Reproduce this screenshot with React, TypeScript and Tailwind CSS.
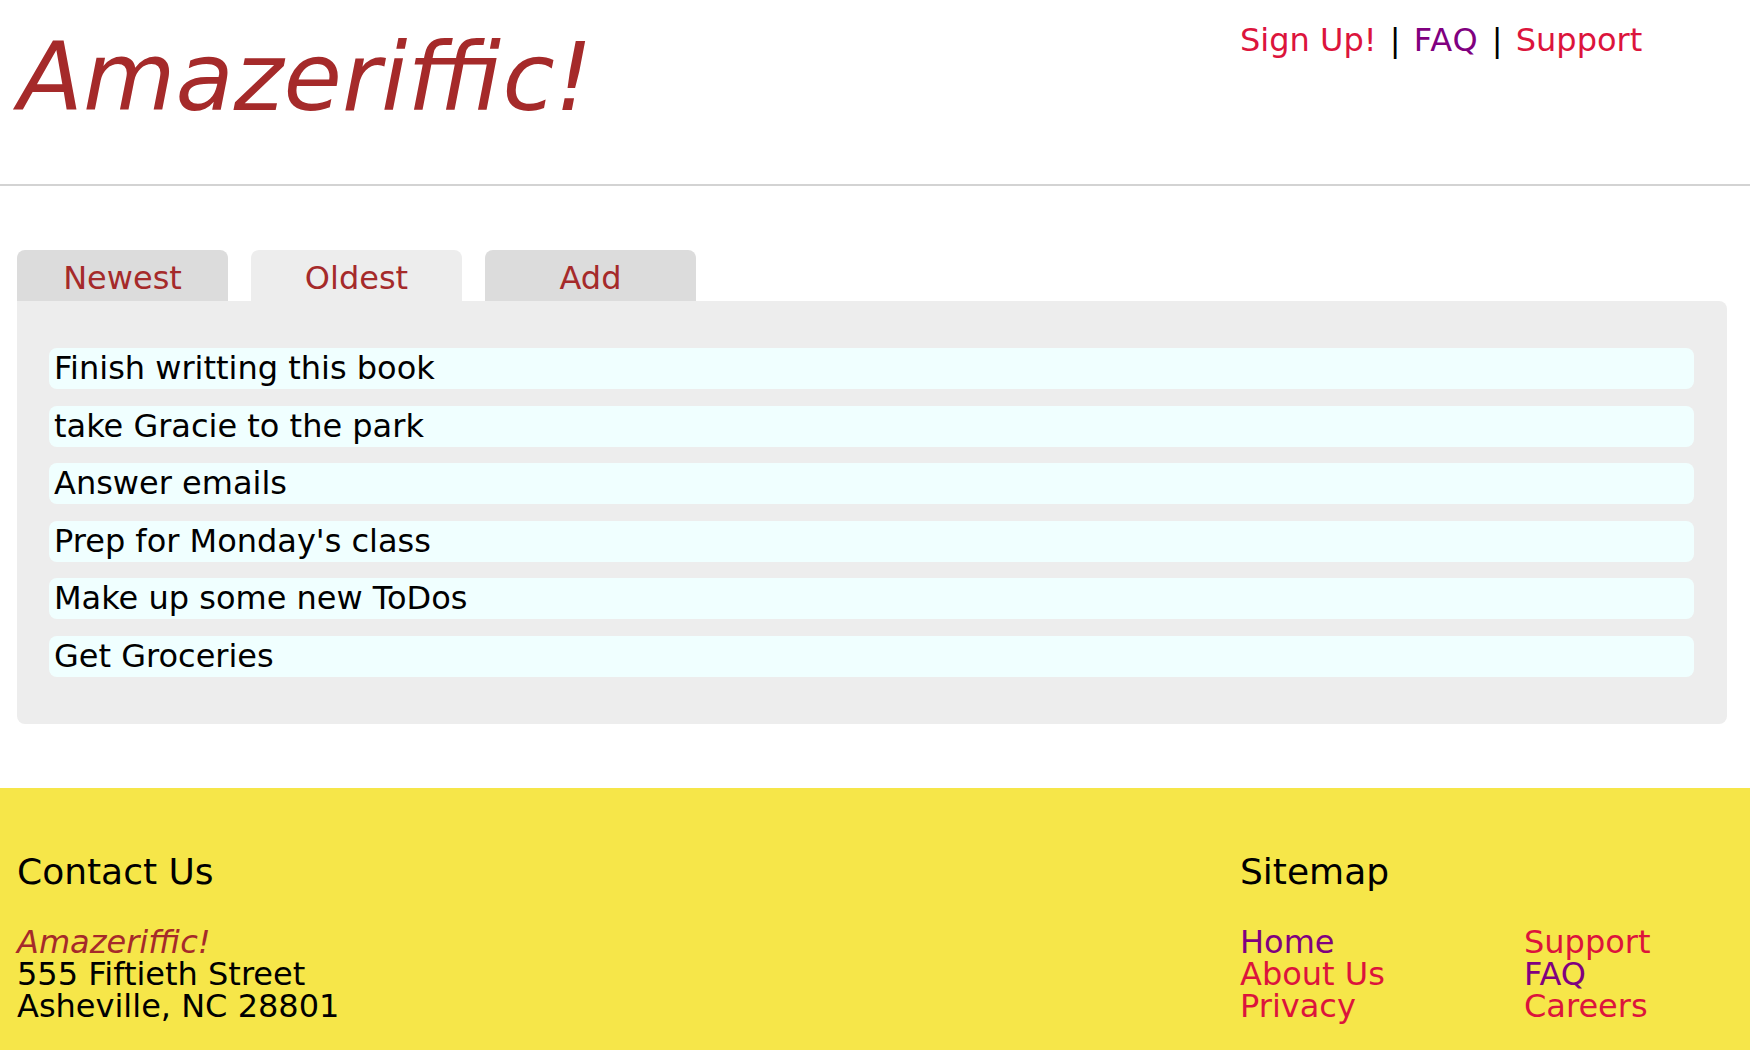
import { useState } from 'react';

const TODOS = [
  'Finish writting this book',
  'take Gracie to the park',
  'Answer emails',
  "Prep for Monday's class",
  'Make up some new ToDos',
  'Get Groceries',
];

const TABS = ['Newest', 'Oldest', 'Add'];

const linkRed = 'text-[#dc143c]';
const linkVisited = 'text-[#800080]';

export default function App() {
  const [active, setActive] = useState(1);

  return (
    <div className="min-h-screen bg-white font-['DejaVu_Sans',Verdana,sans-serif] text-[32px] text-black">
      <header className="flex h-[186px] items-start border-b-2 border-[#d3d3d3]">
        <h1 className="flex-1 pl-[18px] pt-[22px] text-[95px] italic leading-[1.164] text-[#a52a2a]">
          Amazeriffic!
        </h1>
        <nav className="w-[510px] shrink-0 pt-[22px] leading-[1.164] [word-spacing:3px]">
          <a href="#" className={`${linkRed} [word-spacing:0px]`}>
            Sign Up!
          </a>{' '}
          |{' '}
          <a href="#" className={`${linkVisited} tracking-[1px]`}>
            FAQ
          </a>{' '}
          |{' '}
          <a href="#" className={linkRed}>
            Support
          </a>
        </nav>
      </header>

      <main className="pl-[17px] pr-[23px] pt-[64px]">
        <div className="flex gap-[23px]">
          {TABS.map((tab, i) => (
            <button
              key={tab}
              type="button"
              onClick={() => setActive(i)}
              className={
                i === active
                  ? 'h-[51px] w-[211px] rounded-t-[8px] bg-[#ededed] pt-[5px] text-center leading-[37px] text-[#a52a2a]'
                  : 'h-[51px] w-[211px] rounded-t-[8px] bg-[#dcdcdc] pt-[5px] text-center leading-[37px] text-[#a52a2a]'
              }
            >
              {tab}
            </button>
          ))}
        </div>
        <div className="flex flex-col gap-[16.6px] rounded-[8px] rounded-tl-none bg-[#ededed] pb-[47px] pl-[32px] pr-[33px] pt-[47px]">
          {TODOS.map((todo) => (
            <p key={todo} className="h-[41px] rounded-[8px] bg-[#f0ffff] px-[5px] pt-[2px] leading-[37px]">
              {todo}
            </p>
          ))}
        </div>
      </main>

      <footer className="mt-[64px] flex bg-[#f6e649] pb-[28px] pt-[63px]">
        <div className="flex-1 pl-[17px]">
          <h2 className="text-[36px] leading-[41px]">Contact Us</h2>
          <address className="mt-[34px] not-italic leading-[32px]">
            <span className="block italic text-[#a52a2a]">Amazeriffic!</span>
            <span className="block">555 Fiftieth Street</span>
            <span className="block">Asheville, NC 28801</span>
          </address>
        </div>
        <div className="w-[510px] shrink-0">
          <h2 className="text-[36px] leading-[41px]">Sitemap</h2>
          <div className="mt-[34px] grid grid-cols-[284px_1fr] leading-[32px]">
            <ul>
              <li>
                <a href="#" className={linkVisited}>
                  Home
                </a>
              </li>
              <li>
                <a href="#" className={linkRed}>
                  About Us
                </a>
              </li>
              <li>
                <a href="#" className={linkRed}>
                  Privacy
                </a>
              </li>
            </ul>
            <ul>
              <li>
                <a href="#" className={linkRed}>
                  Support
                </a>
              </li>
              <li>
                <a href="#" className={linkVisited}>
                  FAQ
                </a>
              </li>
              <li>
                <a href="#" className={linkRed}>
                  Careers
                </a>
              </li>
            </ul>
          </div>
        </div>
      </footer>
    </div>
  );
}
